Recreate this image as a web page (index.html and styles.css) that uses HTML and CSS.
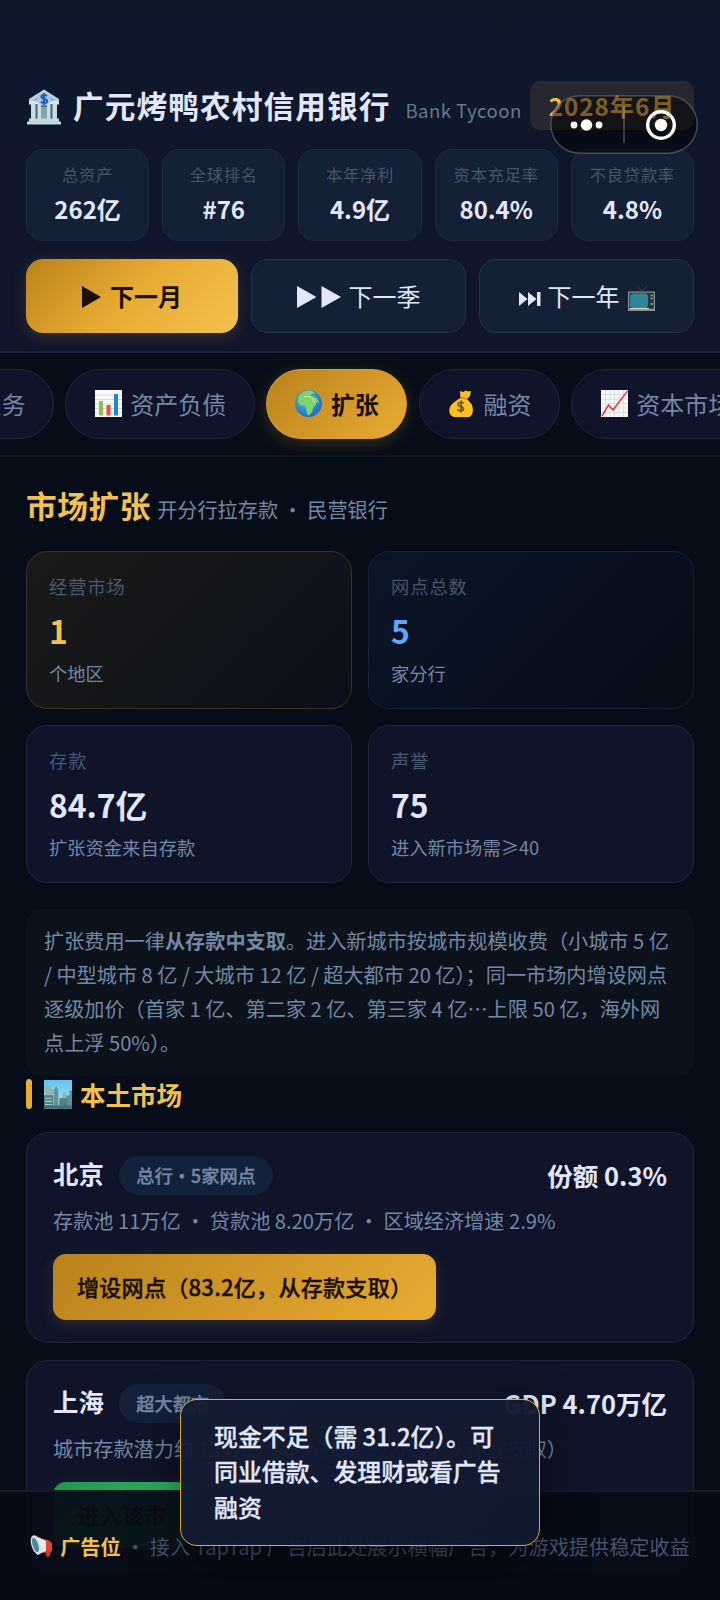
FILE: index.html
```html
<!DOCTYPE html>
<html lang="zh-CN">
<head>
<meta charset="utf-8">
<title>Bank Tycoon</title>
<link rel="stylesheet" href="styles.css">
</head>
<body>
<div class="app">
  <header class="header">
    <div class="brand">
      <svg class="bank" viewBox="0 0 36 36">
        <path d="M18 .5 3 10v3.500h30V10z" fill="#b9d3de"/>
        <path d="M18 3 7 11.500h22z" fill="#90a8bb"/>
        <path d="M3 12h30v3.500H3z" fill="#d5e5ec"/>
        <path d="M5 15h26v15H5z" fill="#4c6676"/>
        <path d="M5 15h4.500v15H5zM11.500 15h3.500v15h-3.500zM21 15h3.500v15H21zM26.500 15H31v15h-4.500z" fill="#c9dde6"/>
        <path d="M15 18h6v12h-6z" fill="#82a6a8"/>
        <path d="M3 29.500h30v3H3zM1 32.500h34v3H1z" fill="#c3dae3"/>
        <circle cx="18" cy="10" r="6.800" fill="#a6c8e8"/>
        <path d="M21 7.200c-1-1.700-5.500-1.600-5.600.6 0 2.700 5.700 1.500 5.700 4.300 0 2.500-5 2.600-6.200.5M18 4v12.200" fill="none" stroke="#1c5fae" stroke-width="2"/>
      </svg>
      <h1 class="bank-name">广元烤鸭农村信用银行</h1>
      <span class="subtitle">Bank Tycoon</span>
      <span class="date">2028年6月</span>
    </div>
    <div class="stats">
      <div class="stat"><span class="stat-label">总资产</span><b class="stat-value">262亿</b></div>
      <div class="stat"><span class="stat-label">全球排名</span><b class="stat-value">#76</b></div>
      <div class="stat"><span class="stat-label">本年净利</span><b class="stat-value">4.9亿</b></div>
      <div class="stat"><span class="stat-label">资本充足率</span><b class="stat-value">80.4%</b></div>
      <div class="stat"><span class="stat-label">不良贷款率</span><b class="stat-value">4.8%</b></div>
    </div>
    <div class="actions">
      <button class="action primary"><svg class="tri" viewBox="0 0 19 22"><path d="M0 0 19 11 0 22z"/></svg>下一月</button>
      <button class="action"><svg class="tri2" viewBox="0 0 44 22"><path d="M0 0 19.500 11 0 22zM24.500 0 44 11 24.500 22z"/></svg>下一季</button>
      <button class="action"><svg class="skip" viewBox="0 0 22 16"><path d="M0 1 8.500 8 0 15zM9 1l8.500 7L9 15zM18 1h3.500v14H18z"/></svg>下一年<svg class="tv" viewBox="0 0 27 25"><path d="m9 0 5 5.500L19 0" fill="none" stroke="#33475a" stroke-width="1"/><path d="M0 5.500h27V25H0z" fill="#8a9490"/><path d="M1.200 6.700h24.600v16H1.200z" fill="#26343c"/><rect x="2" y="7.500" width="18" height="14.500" rx="3" fill="#2d8794"/><path d="M2 22.500h19" stroke="#d7e2df"/><path d="M22.500 9.500h2.500M22.500 12.500h2.500M22.500 18h2.500" stroke="#8d9995" stroke-width="1.500"/></svg></button>
    </div>
  </header>

  <nav class="tabs">
    <div class="tab first">业务</div>
    <div class="tab"><svg class="emoji" viewBox="0 0 27 27"><path d="M0 0h27v27H0z" fill="#fafafa"/><path d="M0 5h27M0 9.500h27M0 14h27M0 18.500h27M0 23h27" stroke="#ccd2d5" stroke-width=".8"/><path d="M4 11h4v14.500H4z" fill="#8bc34a"/><path d="M11.500 15h4v10.500h-4z" fill="#f04a42"/><path d="M19 4h4v21.500h-4z" fill="#1e88d8"/></svg>资产负债</div>
    <div class="tab active"><svg class="emoji" viewBox="0 0 27 27"><defs><radialGradient id="sea" cx=".4" cy=".35" r=".7"><stop stop-color="#4cc3f7"/><stop offset="1" stop-color="#1766c2"/></radialGradient></defs><circle cx="13.500" cy="13.500" r="13.500" fill="url(#sea)"/><path d="M4 6c3-4 7-5.500 11-5.500l3 1 3 2.500-4-.5-2 2 3 .5 3.500 2 3 5-3-1-1 3-2.500 3-1 4-3 3.500-2-1-.5-5-1.500-4H6l-3-3 .5-5z" fill="#82d36c"/><path d="M9 7l4-1 5 3 2 4" stroke="#dce69b" fill="none"/></svg>扩张</div>
    <div class="tab"><svg class="emoji" viewBox="0 0 27 27"><path d="M12 1l3 1 3-1.500 2 1 3-.5-1 5-3 3 4.500 5c3 7 1 13.500-5 13.500H8C1 26.500 0 21 2.500 16c2-3.500 6-5.500 10-8z" fill="#fcc21b"/><path d="M12 7.500l7 1.500" stroke="#c78b16" stroke-width="1.300"/><path d="M15.500 13.500c-1.500-2-6-1-5.500 1.500.5 2.200 5.500 1 5.500 3.800 0 2.500-5 2.700-6 .3M13 10.500v12" stroke="#6b5226" stroke-width="1.600" fill="none"/></svg>融资</div>
    <div class="tab"><svg class="emoji" viewBox="0 0 27 27"><path d="M0 0h27v27H0z" fill="#fafafa"/><path d="M0 4.500h27M0 9h27M0 13.500h27M0 18h27M0 22.500h27M4.500 0v27M9 0v27M13.500 0v27M18 0v27M22.500 0v27" stroke="#cfd8dc" stroke-width=".8"/><path d="M1 26l6.500-11 4.500 5L26.500 1" stroke="#e53945" stroke-width="1.500" fill="none"/></svg>资本市场</div>
  </nav>

  <main class="main">
    <div class="page-title"><h2>市场扩张</h2><span>开分行拉存款 · 民营银行</span></div>
    <section class="summary">
      <div class="card gold"><span class="label">经营市场</span><b class="value">1</b><span class="hint">个地区</span></div>
      <div class="card blue"><span class="label">网点总数</span><b class="value">5</b><span class="hint">家分行</span></div>
      <div class="card"><span class="label">存款</span><b class="value">84.7亿</b><span class="hint">扩张资金来自存款</span></div>
      <div class="card"><span class="label">声誉</span><b class="value">75</b><span class="hint">进入新市场需≥40</span></div>
    </section>
    <p class="note">扩张费用一律<b>从存款中支取</b>。进入新城市按城市规模收费（小城市 5 亿<br>/ 中型城市 8 亿 / 大城市 12 亿 / 超大都市 20 亿）；同一市场内增设网点<br>逐级加价（首家 1 亿、第二家 2 亿、第三家 4 亿…上限 50 亿，海外网<br>点上浮 50%）。</p>
    <h3 class="section"><svg class="city" viewBox="0 0 28 28"><defs><linearGradient id="sky" x2="0" y2="1"><stop stop-color="#62c3f0"/><stop offset="1" stop-color="#b5e3ea"/></linearGradient></defs><path d="M0 0h28v28H0z" fill="url(#sky)"/><path d="M1 5h6v4h5v19H1zM18 14l2-3 2 3v14h-4z" fill="#8fb9b5"/><path d="M10 10l2-4 2 4v18h-4zM22 15h3v-5h3v18h-6z" fill="#5f929c"/><path d="M0 15h9v13H0zM15 18h8v10h-8z" fill="#528087"/><path d="M1 18h7M1 21h7M1 24h7" stroke="#a7cbc7"/><path d="M0 25h28v3H0z" fill="#426f74"/></svg>本土市场</h3>
    <article class="market">
      <div class="market-head"><b class="city-name">北京</b><span class="tag">总行·5家网点</span><b class="figure">份额 0.3%</b></div>
      <p class="detail">存款池 11万亿 · 贷款池 8.20万亿 · 区域经济增速 2.9%</p>
      <button class="cta">增设网点（83.2亿，从存款支取）</button>
    </article>
    <article class="market">
      <div class="market-head"><b class="city-name">上海</b><span class="tag">超大都市</span><b class="figure">GDP 4.70万亿</b></div>
      <p class="detail">城市存款潜力约 12万亿（进入费用 32.0亿，从存款支取）</p>
      <button class="cta green">进入该市</button>
    </article>
  </main>

  <footer class="ad"><svg class="horn" viewBox="0 0 24 24"><path d="M8 4l10 2 4 3v8l-4 2-10-1z" fill="#e94235"/><path d="M15 17l6-1-1 6-3 1z" fill="#cf3b32"/><path d="M4 1l12 6v10L7 21z" fill="#e2eaee"/><ellipse cx="6" cy="11" rx="4.500" ry="10" transform="rotate(-18 6 11)" fill="#d5e1e8"/><ellipse cx="5.500" cy="11" rx="2.800" ry="7.500" transform="rotate(-18 5.500 11)" fill="#4e8797"/></svg><b>广告位</b><span>&nbsp;· 接入 TapTap 广告后此处展示横幅广告，为游戏提供稳定收益</span></footer>

  <div class="toast">现金不足（需 31.2亿）。可<br>同业借款、发理财或看广告<br>融资</div>

  <div class="capsule">
    <svg viewBox="0 0 148 59"><g fill="#fff"><circle cx="24" cy="30" r="3.400"/><circle cx="36.500" cy="30" r="5.800"/><circle cx="49" cy="30" r="3.400"/><circle cx="111" cy="30" r="6.200"/></g><circle cx="111" cy="30" r="13.300" fill="none" stroke="#fff" stroke-width="3.400"/><path d="M74 11v37" stroke="#fff" stroke-opacity=".25" stroke-width="1.600"/></svg>
  </div>
</div>
</body>
</html>
```
FILE: styles.css
```css
* { box-sizing: border-box; margin: 0; padding: 0; }
body { background: #070d18; }
.app {
  position: relative;
  width: 720px;
  height: 1600px;
  overflow: hidden;
  background: #070d18;
  color: #e2e8fa;
  font-family: "Noto Sans CJK SC", sans-serif;
  white-space: nowrap;
}
button { font-family: inherit; border: 0; color: inherit; white-space: nowrap; }

.header {
  height: 353px;
  padding: 80px 26px 0 26px;
  background: linear-gradient(180deg, #0e182b, #10152c);
  border-bottom: 2px solid #1c2235;
}
.brand { display: flex; align-items: center; height: 50px; }
.bank { width: 36px; height: 36px; margin: 4px 11px 0 0; }
.bank-name { font-size: 30.700px; line-height: 46px; letter-spacing: 1.050px; font-weight: 700; }
.subtitle { margin: 9px 0 0 15px; font-size: 18.600px; line-height: 28px; letter-spacing: .45px; color: #66798f; }
.date {
  margin-left: auto;
  padding: 0 18.500px;
  height: 49px;
  line-height: 49px;
  border-radius: 10px;
  background: #272730;
  color: #f2c14e;
  font-size: 24.200px;
  letter-spacing: 1px;
  font-weight: 700;
}
.stats { display: grid; grid-template-columns: repeat(5, 1fr); gap: 13px; margin-top: 19px; }
.stat {
  display: flex; flex-direction: column; align-items: center;
  height: 92px;
  padding-top: 11px;
  background: #142036;
  border: 1px solid #1e293f;
  border-radius: 17px;
}
.stat-label { font-size: 16.300px; line-height: 26px; letter-spacing: .8px; color: #475569; }
.stat-value { font-size: 24px; line-height: 36px; margin-top: 4px; }
.actions { display: grid; grid-template-columns: 212px 1fr 1fr; gap: 13px; margin-top: 18px; }
.action {
  display: flex; align-items: center; justify-content: center;
  height: 74px;
  padding-bottom: 2px;
  border-radius: 17px;
  border: 1px solid #253147;
  background: #142036;
  color: #e2e8fa;
  font-size: 24px;
}
.primary {
  border: 0;
  background: linear-gradient(135deg, #b9821b, #e8ab33 50%, #f2c14e);
  color: #1a1005;
  font-weight: 700;
  box-shadow: 0 4px 16px rgba(232, 171, 51, .18);
}
.action svg { fill: currentColor; }
.tri { width: 19px; height: 22px; margin: 3px 9px 0 0; }
.tri2 { width: 44px; height: 22px; margin: 3px 8px 0 0; }
.skip { width: 22px; height: 16px; margin: 7px 7px 0 0; }
.tv { width: 27px; height: 25px; margin: 6px 0 0 8px; }

.tabs {
  display: flex; align-items: center; gap: 11.300px;
  height: 104px;
  padding-bottom: 1px;
  background: #070d18;
  border-bottom: 2px solid #0e1420;
}
.tab {
  display: flex; flex: none; align-items: center;
  height: 70px;
  padding: 0 27.500px 1px 28.500px;
  border: 1px solid #20263a;
  border-radius: 35px;
  background: #0f142a;
  color: #7488a3;
  font-size: 24px;
}
.first { width: 141px; margin-left: -87px; justify-content: flex-end; }
.emoji { width: 27px; height: 27px; margin: 1px 8.400px 0 0; }
.active {
  border-color: #dda032;
  background: linear-gradient(135deg, #b9821b, #e8ab33);
  color: #1a1005;
  font-weight: 700;
  box-shadow: 0 4px 16px rgba(232, 171, 51, .2);
}

.main { padding: 23px 26px 0 26px; }
.page-title { display: flex; align-items: baseline; height: 70px; }
.page-title h2 { font-size: 30.700px; line-height: 50px; letter-spacing: .6px; color: #f2c14e; }
.page-title span { margin-left: 6px; font-size: 20.160px; color: #7488a3; }
.summary { display: grid; grid-template-columns: 1fr 1fr; gap: 16.500px 16px; margin-top: 1px; }
.card {
  display: flex; flex-direction: column;
  height: 157.500px;
  padding: 21px 22px;
  border: 1px solid #1f2438;
  border-radius: 21px;
  background: #0f142a;
}
.label { font-size: 18.200px; line-height: 26px; letter-spacing: 1px; color: #475973; }
.value { font-size: 31.800px; line-height: 46px; margin-top: 8px; }
.hint { font-size: 18.300px; line-height: 28px; margin-top: 6px; color: #7488a3; }
.gold { border-color: #3a3222; background: linear-gradient(135deg, #1b1a19, #0a101a); }
.gold .value { color: #f2c14e; }
.blue { border-color: #162236; background: linear-gradient(135deg, #0a1528, #070d18); }
.blue .value { color: #60a5fa; }
.blue .label { color: #475569; }
.note {
  height: 167px;
  margin-top: 26px;
  padding: 15px 18px;
  border-radius: 16px;
  background: #0b121c;
  font-size: 20.160px;
  line-height: 34.200px;
  color: #7488a3;
}
.section {
  display: flex; align-items: center;
  height: 30px;
  margin-top: 4px;
  font-size: 25.500px;
  line-height: 28px;
  padding-bottom: 1px;
  color: #f2c14e;
}
.section::before { content: ""; width: 5.500px; height: 30px; border-radius: 3px; background: #e8ab33; margin-right: 12px; }
.city { width: 28.500px; height: 28.500px; margin: 1px 8px 0 0; }
.market {
  height: 211px;
  margin-top: 17px;
  padding: 19px 26px;
  border: 1px solid #1f2438;
  border-radius: 22px;
  background: #0f142a;
}
.section + .market { margin-top: 22px; }
.market-head { display: flex; align-items: center; height: 46px; padding-top: 2px; }
.city-name { font-size: 25.400px; margin: -5px 15.500px 0 0; }
.tag {
  height: 39px;
  line-height: 38px;
  padding: 0 17px;
  border-radius: 20px;
  background: #14213a;
  color: #7488a3;
  -webkit-text-stroke: .35px #7488a3;
  font-size: 18.200px;
  font-weight: 500;
}
.figure { margin: -3px 0 0 auto; font-size: 25.500px; }
.detail { margin-top: 7px; font-size: 20.160px; line-height: 32px; color: #7488a3; }
.cta {
  display: block;
  height: 66px;
  margin-top: 17px;
  padding: 0 24px 2px;
  border-radius: 13px;
  background: linear-gradient(135deg, #b9821b, #e8ab33);
  box-shadow: 0 4px 16px rgba(232, 171, 51, .15);
  color: #1a1005;
  -webkit-text-stroke: .4px #1a1005;
  font-size: 22.080px;
  letter-spacing: .23px;
  font-weight: 500;
}
.green { background: linear-gradient(135deg, #1d9550, #34c46f); }

.ad {
  position: absolute;
  left: 0; right: 0; bottom: 0;
  height: 110px;
  display: flex; align-items: center; justify-content: center;
  border-top: 2px solid #131a28;
  background: rgba(6, 12, 23, .94);
  font-size: 20.160px;
  color: #475569;
}
.ad b { color: #f2c14e; }
.horn { width: 24px; height: 24px; margin-right: 6px; }

.toast {
  position: absolute;
  left: 180px; top: 1398.500px;
  width: 360px; height: 147px;
  padding: 18px 33px;
  border: 1px solid #dda83c;
  border-radius: 17px;
  background: linear-gradient(135deg, rgba(20, 29, 52, .97), rgba(16, 25, 47, .97));
  box-shadow: 0 15px 46px rgba(0, 0, 0, .5);
  font-size: 23.880px;
  line-height: 35.700px;
  -webkit-text-stroke: .3px #e2e8fa;
  font-weight: 500;
}
.capsule {
  position: absolute;
  left: 550px; top: 95px;
  width: 148px; height: 59px;
  border-radius: 30px;
  background: rgba(0, 0, 0, .5);
  box-shadow: inset 0 0 0 1.500px rgba(255, 255, 255, .25);
}
.capsule svg { display: block; width: 148px; height: 59px; }
```
